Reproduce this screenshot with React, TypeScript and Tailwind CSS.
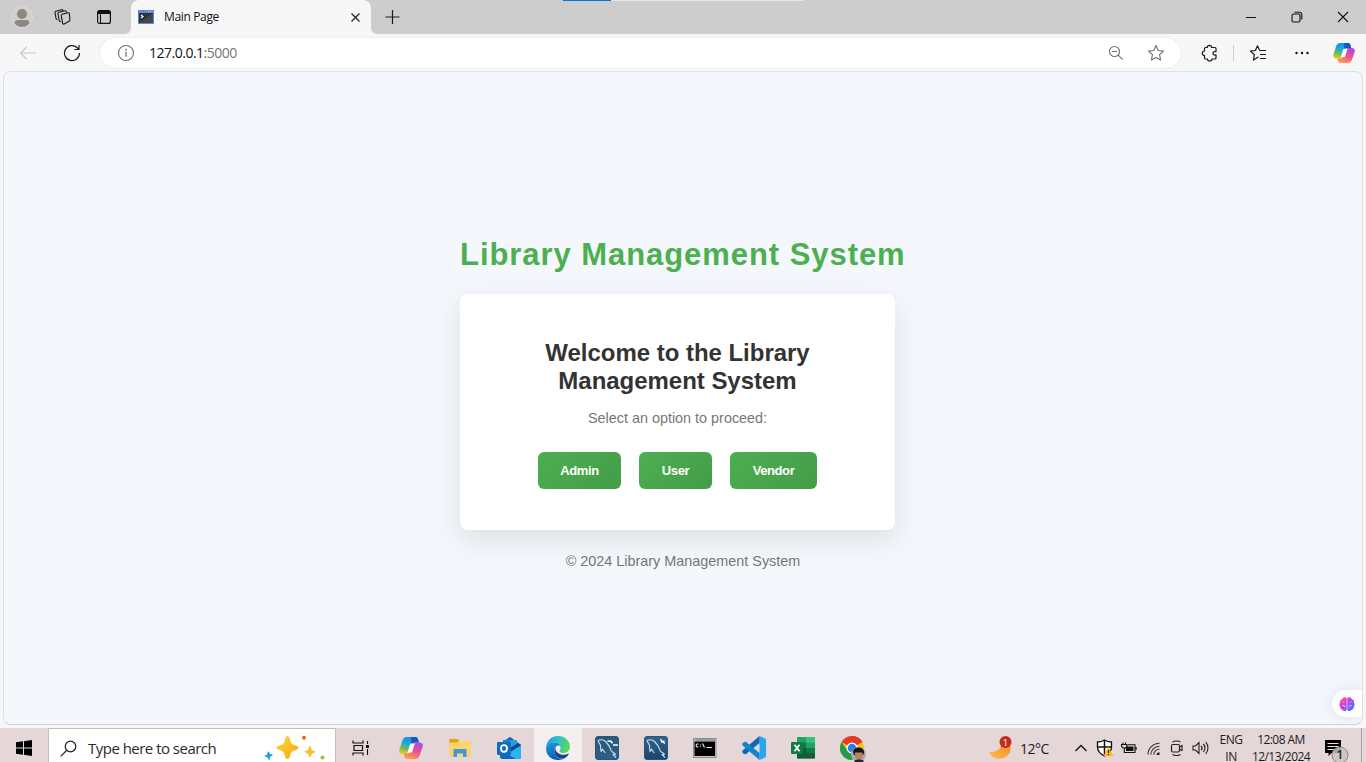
import React, { useId } from "react";

type IconProps = { w: number; h: number; children: React.ReactNode; className?: string };

function Icon({ w, h, children, className = "" }: IconProps) {
  return (
    <svg width={w} height={h} viewBox={`0 0 ${w} ${h}`} fill="none" className={`shrink-0 ${className}`}>
      {children}
    </svg>
  );
}

function Cell({ className, children }: { className: string; children: React.ReactNode }) {
  return <div className={`flex h-full shrink-0 items-center justify-center ${className}`}>{children}</div>;
}

function CopilotLogo({ size }: { size: number }) {
  const id = useId();
  return (
    <svg width={size} height={size} viewBox="0 0 24 24" className="shrink-0">
      <defs>
        <linearGradient id={`${id}a`} x1="0.6" y1="0" x2="0.3" y2="1">
          <stop offset="0" stopColor="#1b8cf0" />
          <stop offset="0.4" stopColor="#19a7dd" />
          <stop offset="0.7" stopColor="#6cba5a" />
          <stop offset="1" stopColor="#f2c51b" />
        </linearGradient>
        <linearGradient id={`${id}b`} x1="0.7" y1="0" x2="0.3" y2="1">
          <stop offset="0" stopColor="#a64be6" />
          <stop offset="0.5" stopColor="#ee5090" />
          <stop offset="1" stopColor="#ffa04a" />
        </linearGradient>
      </defs>
      <path d="M8 1h8.5c1.3 0 2 .8 2.400 2l1 3.500h-4c-1.500 0-2.300.8-2.700 2.200l-2 6.800c-.5 1.700-1.400 2.500-3 2.500H3.500C.8 18-.3 16 .4 13.400L3.600 4C4.300 2 5.800 1 8 1z" fill={`url(#${id}a)`} />
      <path d="M12.500 1h4c1.300 0 2 .8 2.400 2l1 3.500h-4c-1.400 0-2.200.7-2.600 2L12 6z" fill="#1456c8" />
      <path d="M16 23H8.200c-1.500 0-2.300-.8-2.700-2.200L4.700 18h3.500c1.600 0 2.500-.8 3-2.500l2-6.800c.4-1.400 1.200-2.200 2.700-2.200h4.600c2.700 0 3.800 2 3.100 4.600L20.400 20c-.7 2-2.200 3-4.400 3z" fill={`url(#${id}b)`} />
      <path d="M12.200 7.400h4.200c-.6.300-.9.900-1.100 1.700l-1.800 6c-.3 1.100-.9 1.600-1.900 1.600H7.700c.7-.3 1.100-.9 1.400-1.900l1.600-5.600c.3-1.100.7-1.600 1.500-1.800z" fill="#fff" />
    </svg>
  );
}

function Star() {
  return <path d="M9 1.600l2.200 4.900 5.300.6-4 3.600 1.100 5.300L9 13.400 4.400 16l1.100-5.300-4-3.600 5.300-.6z" strokeLinejoin="round" />;
}

function TitleBar() {
  return (
    <header className="relative flex h-[34px] shrink-0 bg-[#cdcdcd]">
      <Cell className="w-[44px]">
        <Icon w={22} h={22}>
          <circle cx="11" cy="11" r="10.500" fill="#d3d0cc" stroke="#dedbd7" />
          <circle cx="11" cy="8" r="5" fill="#8b8783" />
          <path d="M3.500 17c0-2 2-3 3.500-3h8c1.500 0 3.500 1 3.500 3-1.700 2.600-4.400 4-7.500 4s-5.800-1.400-7.500-4z" fill="#8b8783" />
        </Icon>
      </Cell>
      <Cell className="w-[36px]">
        <Icon w={18} h={18}>
          <g stroke="#1a1a1a" strokeWidth="1.100" strokeLinejoin="round" strokeLinecap="round">
            <path d="M9.200 6.300l5.600-1.500c.8-.2 1.500.3 1.600 1.100l.5 6c0 .7-.3 1.200-.9 1.400l-4.800 2.700c-.8.300-1.500-.1-1.600-.9L8.200 7.700c-.1-.7.3-1.200 1-1.400z" />
            <path d="M13.200 4.300v-.6c0-.7-.6-1.100-1.300-.9L6 4.300c-.8.200-1.200.8-1 1.500l1.200 6.700c.1.700.6 1.200 1.400 1.300" />
            <path d="M9.900 2.600c-.1-.7-.7-1.100-1.400-.9L3 3.200c-.8.200-1.200.8-1 1.500l1 5.700c.1.600.500 1 1.100 1.100" />
          </g>
        </Icon>
      </Cell>
      <Cell className="w-[48px]">
        <Icon w={16} h={16}>
          <rect x="1.600" y="1.600" width="12.800" height="12.800" rx="2" stroke="#111" strokeWidth="1.200" />
          <path d="M1.500 5V3.500a2 2 0 0 1 2-2h9a2 2 0 0 1 2 2V5z" fill="#111" />
          <path d="M4.500 5v9" stroke="#111" strokeWidth="1.100" />
        </Icon>
      </Cell>
      <div className="relative ml-[3px] flex w-[240px] items-center rounded-t-lg bg-[#f7f7f7] pl-[7px] pr-[9px]">
        <svg className="absolute bottom-0 -left-1.5" width="6" height="6"><path d="M6 0v6H0a6 6 0 0 0 6-6z" fill="#f7f7f7" /></svg>
        <svg className="absolute -right-1.5 bottom-0" width="6" height="6"><path d="M0 0v6h6a6 6 0 0 1-6-6z" fill="#f7f7f7" /></svg>
        <Icon w={16} h={14}>
          <rect width="16" height="14" fill="#5b8ad6" />
          <rect x="1" y="3" width="14" height="10" fill="#2f3133" />
          <path d="M1 13L15 3v10z" fill="#454749" />
          <path d="M3 5l2 1.500L3 8" stroke="#fff" strokeWidth="1.200" />
          <path d="M10 1.500h1M12 1.500h1" stroke="#bcd3f5" />
          <path d="M14 1.500h1" stroke="#e08a6a" />
        </Icon>
        <span className="ml-[10px] flex-1 text-[12px] leading-4 tracking-[-0.35px] text-[#111]">Main Page</span>
        <Icon w={14} h={14}>
          <path d="M3.500 3.500l8 8M11.500 3.500l-8 8" stroke="#222" strokeWidth="1.200" />
        </Icon>
      </div>
      <Cell className="w-[43px]">
        <Icon w={16} h={16}>
          <path d="M7.500 1v14M.5 8h14" stroke="#1a1a1a" strokeWidth="1.200" />
        </Icon>
      </Cell>
      <div className="ml-auto flex">
        <Cell className="w-[46px]">
          <Icon w={12} h={12}><path d="M1 6.500h10" stroke="#111" /></Icon>
        </Cell>
        <Cell className="w-[46px]">
          <Icon w={12} h={12}>
            <rect x="1" y="3" width="8" height="8" rx="1.500" stroke="#111" strokeWidth="1.100" />
            <path d="M3.500 1.200h5a2.300 2.300 0 0 1 2.300 2.300v5" stroke="#111" strokeWidth="1.100" />
          </Icon>
        </Cell>
        <Cell className="w-[46px]">
          <Icon w={12} h={12}><path d="M1 1l10 10M11 1L1 11" stroke="#111" strokeWidth="1.100" /></Icon>
        </Cell>
      </div>
      <div className="absolute left-[563px] top-0 flex h-px">
        <div className="w-12 bg-[#0078d7]" />
        <div className="w-[193px] bg-[#e6e6e6]" />
      </div>
    </header>
  );
}

function Toolbar() {
  return (
    <nav className="flex h-[37px] shrink-0 items-center bg-[#f7f7f7] pl-[6px]">
      <Cell className="w-11">
        <Icon w={18} h={14}><path d="M17 7H1.500M7.500 1L1.500 7l6 6" stroke="#c8c8c8" strokeWidth="1.100" /></Icon>
      </Cell>
      <Cell className="w-11">
        <Icon w={18} h={18}>
          <path d="M16.500 9A7.500 7.500 0 1 1 14 3.500l1.800 1.700" stroke="#1a1a1a" strokeWidth="1.200" />
          <path d="M16 1v4.500h-4.500" stroke="#1a1a1a" strokeWidth="1.200" />
        </Icon>
      </Cell>
      <div className="ml-[6px] flex h-[30px] w-[1081px] items-center rounded-full bg-white pl-[8px] pr-[5px] shadow-[0_0_2px_rgba(0,0,0,0.12)]">
        <Cell className="w-9">
          <Icon w={18} h={18}>
            <circle cx="9" cy="9" r="7.500" stroke="#6f6f6f" strokeWidth="1.100" />
            <path d="M9 7.800v5" stroke="#6f6f6f" strokeWidth="1.300" />
            <circle cx="9" cy="5.700" r="0.900" fill="#6f6f6f" />
          </Icon>
        </Cell>
        <span className="ml-[5px] flex-1 text-[14px] leading-5 tracking-[-0.5px] text-[#111]">
          127.0.0.1<span className="text-[#767676]">:5000</span>
        </span>
        <Cell className="w-10">
          <Icon w={16} h={16}>
            <circle cx="6.500" cy="6.500" r="5" stroke="#6f6f6f" strokeWidth="1.100" />
            <path d="M4 6.500h5M10.200 10.200l4.500 4.500" stroke="#6f6f6f" strokeWidth="1.100" />
          </Icon>
        </Cell>
        <Cell className="w-10">
          <Icon w={18} h={18}><g stroke="#6f6f6f" strokeWidth="1.100"><Star /></g></Icon>
        </Cell>
      </div>
      <Cell className="ml-[7px] w-11">
        <Icon w={18} h={18}>
          <path d="M6.200 3.500c0-1.300 1-2.200 2.300-2.200s2.200.9 2.200 2.200H14c.6 0 1 .4 1 1v3.200c-1.700-.6-3 .3-3 1.600s1.300 2.200 3 1.600V14c0 .6-.4 1-1 1h-3c.2 1.200-.9 2-2.300 2s-2.300-.8-2.200-2H4.500c-.6 0-1-.4-1-1v-2.500C2.200 11.500 1.300 10.500 1.300 9.300S2.200 7 3.500 7V4.500c0-.6.4-1 1-1z" stroke="#1a1a1a" strokeWidth="1.200" strokeLinejoin="round" />
        </Icon>
      </Cell>
      <div className="ml-px h-4 w-px bg-[#cfcfcf]" />
      <Cell className="ml-[2px] w-11">
        <Icon w={18} h={18}>
          <path d="M9.500 13.400L9 13.200 4.400 16l1-5.300-4-3.600 5-.6L8.500 1.800l2.200 4.700M10.700 6.500H17M11 10.500h6M11 14.500h6" stroke="#1a1a1a" strokeWidth="1.200" strokeLinejoin="round" />
        </Icon>
      </Cell>
      <Cell className="w-11">
        <Icon w={16} h={4}>
          <circle cx="2.500" cy="2" r="1.200" fill="#111" /><circle cx="8" cy="2" r="1.200" fill="#111" /><circle cx="13.500" cy="2" r="1.200" fill="#111" />
        </Icon>
      </Cell>
      <Cell className="w-10"><CopilotLogo size={22} /></Cell>
    </nav>
  );
}

function ActionButton({ label, width }: { label: string; width: string }) {
  return (
    <button className={`h-[37px] rounded-md bg-linear-[135deg,#4caf50,#449d48] text-[13px] font-bold tracking-[-0.400px] text-white ${width}`}>{label}</button>
  );
}

function Page() {
  return (
    <div className="flex min-h-0 flex-1 bg-[#f7f7f7] px-[3px] pb-[3px]">
      <main className="relative flex flex-1 flex-col items-center overflow-hidden rounded-lg border border-[#dfe1e4] border-b-[#cfd1d4] bg-[#f4f7fc] pt-[165px] font-['Liberation_Sans',Arial,sans-serif]">
        <div className="flex w-[446px] flex-col">
          <h1 className="whitespace-nowrap text-[31px] font-bold leading-9 tracking-[0.940px] text-[#4caf50]">Library Management System</h1>
          <section className="mt-[21px] flex h-[236px] w-[435px] flex-col items-center rounded-lg bg-white pt-[45px] text-center shadow-[0_10px_30px_rgba(0,0,0,0.1)]">
            <h2 className="text-[24px] font-bold leading-7 tracking-[-0.030px] text-[#333]">Welcome to the Library<br />Management System</h2>
            <p className="mt-[15px] text-[14.400px] leading-4 text-[#777]">Select an option to proceed:</p>
            <div className="mt-[26px] flex gap-[18px]">
              <ActionButton label="Admin" width="w-[83px]" />
              <ActionButton label="User" width="w-[73px]" />
              <ActionButton label="Vendor" width="w-[87px]" />
            </div>
          </section>
          <footer className="mt-[23px] text-center text-[14.400px] leading-4 text-[#777]">© 2024 Library Management System</footer>
        </div>
        <div className="absolute bottom-[7px] right-0 flex h-[27px] w-[30px] items-center justify-center rounded-l-full bg-white shadow-[0_0_14px_rgba(120,130,160,0.18)]">
          <BrainIcon />
        </div>
      </main>
    </div>
  );
}

function BrainIcon() {
  return (
    <Icon w={16} h={16}>
      <defs>
        <linearGradient id="brain" x1="0" y1="0" x2="1" y2="1">
          <stop offset="0" stopColor="#ff6a3c" /><stop offset="0.35" stopColor="#e13bd0" /><stop offset="0.65" stopColor="#7a5cf5" /><stop offset="1" stopColor="#2f7bff" />
        </linearGradient>
      </defs>
      <path d="M7.700 2C6.200.5 3.500 1.200 3.200 3.200 1.300 3.500.6 5.300 1.200 6.600 0 7.500 0 9.700 1.200 10.500c-.3 2 1 3 2.300 3.200.8 1.700 3.200 1.800 4.200.3zM8.300 2c1.500-1.500 4.200-.8 4.500 1.200 1.900.3 2.600 2.100 2 3.400 1.200.9 1.200 3.100 0 3.900.3 2-1 3-2.300 3.200-.8 1.700-3.200 1.800-4.200.3z" fill="url(#brain)" />
      <path d="M3.500 5.500l2 1M3 9.500h2.500v2M12.500 5.500l-2 1M13 9.500h-2.500v2" stroke="#e9c9ff" strokeWidth="0.700" />
    </Icon>
  );
}

function DolphinTile({ tool }: { tool: boolean }) {
  return (
    <Icon w={24} h={24}>
      <defs>
        <linearGradient id={tool ? "tileA" : "tileB"} x1="0" y1="0" x2="0" y2="1">
          <stop stopColor={tool ? "#28597c" : "#2d6494"} /><stop offset="1" stopColor={tool ? "#2d6088" : "#1e4468"} />
        </linearGradient>
      </defs>
      <rect x="0.500" y="0.500" width="23" height="23" rx="2.500" fill={`url(#${tool ? "tileA" : "tileB"})`} stroke="#2a5678" />
      <path d="M3 4.500c3-1.500 6-.5 8 1.500 3.500 3.500 4 6 5.500 9 .8 1.500 2.500 1.800 4 3.300l-2.500.2 3 3M3 4.500c.2 2 2 3 2.500 5 .4 2-.3 3.500.7 6l1.300-2.500 2.700 4" stroke="#cfe0ec" strokeWidth="1.100" strokeLinejoin="round" />
      {tool ? <path d="M12.500 5l3.500.2 1.500 2M18 9h5" stroke="#fff" strokeWidth="1.600" /> : <path d="M16.500 3l1.500 2.500 3 2M17 6l3.500-1" stroke="#fff" strokeWidth="1.400" />}
    </Icon>
  );
}

function TaskIcons() {
  return (
    <>
      <Cell className="w-[50px]">
        <Icon w={18} h={16}>
          <path d="M1 .5v2.500h10V.5M1 15.500V13h10v2.500M2 5.500h8.500v5H2z" stroke="#111" strokeWidth="1.200" />
          <path d="M15.500 1v3M15.500 9v6" stroke="#111" strokeWidth="1.100" />
          <rect x="14" y="5" width="3" height="3" fill="#111" />
        </Icon>
      </Cell>
      <Cell className="w-[49px]"><CopilotLogo size={24} /></Cell>
      <Cell className="w-[49px]">
        <Icon w={24} h={20}>
          <path d="M1.500 2c0-.6.400-1 1-1H10l1.500 2.500V8h-10z" fill="#e0a30d" />
          <path d="M1.500 4.500H9L11 3h11.500v15.500h-21z" fill="#fdd466" />
          <path d="M5.500 19v-6.500c0-1 .5-1.500 1.500-1.500h10c1 0 1.500.5 1.500 1.500V19h-3.500v-3.500h-6V19z" fill="#3d97e0" />
        </Icon>
      </Cell>
      <Cell className="w-[50px]">
        <Icon w={26} h={24}>
          <path d="M4 8l9-6.500c.7-.5 1.300-.5 2 0L25 9v12c0 1-.7 2-2 2H7c-2 0-3-1-3-2z" fill="#1066b8" />
          <path d="M7 4h14v10l-7 4-7-4z" fill="#1b82cf" /><path d="M14 4h7v6l-7 4z" fill="#2c9be0" />
          <path d="M25 9.500L11 18l9 5h3c1.500 0 2-1 2-2z" fill="#29b5ee" /><path d="M25 9L14 16l-3-2 11-7z" fill="#0b4a94" />
          <rect x="1" y="6" width="14" height="13" rx="1.200" fill="#0f6cbd" />
          <ellipse cx="8" cy="12.500" rx="3" ry="3.300" stroke="#fff" strokeWidth="1.800" />
        </Icon>
      </Cell>
      <Cell className="w-[48px] bg-[#f3eeef]">
        <Icon w={24} h={24}>
          <defs>
            <linearGradient id="edgeTop" x1="0" y1="0.300" x2="1" y2="0.500"><stop stopColor="#1ca2e0" /><stop offset="0.500" stopColor="#2fc2c7" /><stop offset="1" stopColor="#68d64c" /></linearGradient>
            <linearGradient id="edgeLeft" x1="0" y1="0" x2="0.600" y2="1"><stop stopColor="#1fa0e4" /><stop offset="1" stopColor="#0c54a8" /></linearGradient>
          </defs>
          <path d="M.3 11C.7 4.500 5.800 0 12 0c7 0 12 5 12 10.500 0 4-3 6.500-6.500 6.500-3 0-4-1-4-2 0-.8 1-1.200 1-3C14.500 9 12 6.500 8.500 6.500 4.500 6.500 1 9 .3 11z" fill="url(#edgeTop)" />
          <path d="M.1 12C.5 8.500 4 6.500 8.500 6.500c3 0 5 1.500 5.700 3.500-3-1.500-6 1-6 4.500 0 5 4 9.200 9.300 8.200C15 23.800 13.500 24 12 24 5.500 24-.5 19 .1 12z" fill="url(#edgeLeft)" />
          <path d="M10.800 10c-1.800 1-2.600 2.600-2.600 4.700 0 5 5 9.300 10 7.700 2-1 3.500-2.400 4.500-4.200.2-.5-.2-.8-.7-.5-1.200.7-2.700 1-4.200 1-5 0-8.400-3.300-8.400-6.300 0-1 .5-1.800 1.400-2.400z" fill="#114a8b" />
        </Icon>
      </Cell>
      <Cell className="w-[50px]"><DolphinTile tool /></Cell>
      <Cell className="w-[48px]"><DolphinTile tool={false} /></Cell>
      <Cell className="w-[49px]">
        <Icon w={24} h={20}>
          <rect x="0.500" y="0.500" width="22.500" height="19" fill="#c9c9c9" stroke="#8b8b8b" />
          <path d="M2 2h20" stroke="#6e6e6e" /><rect x="1.500" y="3.500" width="20.500" height="14.500" fill="#000" />
          <path d="M5.500 6H4.200c-.7 0-1 .5-1 1.500s.3 1.500 1 1.500h1.300M7.500 6.500v.8M7.500 8.200V9M9.500 5.500l2 4M13.500 9.500H19" stroke="#e5e5e5" strokeWidth="1.200" />
        </Icon>
      </Cell>
      <Cell className="w-[49px]">
        <Icon w={24} h={24}>
          <path d="M17.500 0L24 3v18l-6.500 3z" fill="#27a5f2" />
          <path d="M17.500 0v7L3.500 18.500.3 16.700v-2z" fill="#0a6ab5" />
          <path d="M17.500 24v-7L3.500 5.500.3 7.300v2z" fill="#1185cc" />
        </Icon>
      </Cell>
      <Cell className="w-[49px]">
        <Icon w={24} h={22}>
          <rect x="6" width="18" height="21.500" rx="1" fill="#21a366" /><path d="M15 0h8c.6 0 1 .4 1 1v4.500h-9z" fill="#33c481" />
          <path d="M6 5.500h9V11H6z" fill="#107c41" /><path d="M6 11h9v5H6z" fill="#185c37" /><path d="M15 11h9v5h-9z" fill="#107c41" /><path d="M6 16h18v4.500c0 .6-.4 1-1 1H7c-.6 0-1-.4-1-1z" fill="#185c37" />
          <rect y="5" width="12" height="12" rx="1" fill="#107c41" />
          <path d="M3.500 7.700l5 6.600M8.500 7.700l-5 6.600" stroke="#fff" strokeWidth="1.700" />
        </Icon>
      </Cell>
      <Cell className="w-[50px] pl-[2px]">
        <Icon w={27} h={27} className="mt-[3px]">
          <circle cx="12" cy="12" r="12" fill="#fbc116" />
          <path d="M12 12L1.600 6A12 12 0 0 1 22.400 6z" fill="#e33b2e" /><path d="M1.600 6A12 12 0 0 0 12 24l5-9-9 .5z" fill="#229b4d" /><path d="M12 6h10.400A12 12 0 0 0 12 0z" fill="#e33b2e" />
          <circle cx="12" cy="12" r="5.500" fill="#fff" /><circle cx="12" cy="12" r="4.300" fill="#2b7de9" />
          <circle cx="18.500" cy="18.500" r="7.500" fill="#9fb0b0" />
          <path d="M13 16c0-3 2-4.500 5.500-4.500s6 2 5.500 5.500l-1 2h-9z" fill="#191614" /><path d="M15 16.500h7.500v4c0 2-1.500 3.500-3.700 3.500S15 22.500 15 20.500z" fill="#b98464" /><path d="M14 25c2-2 8-2 10 0l-2 2h-6z" fill="#1f2a36" />
        </Icon>
      </Cell>
    </>
  );
}

function Tray() {
  return (
    <div className="ml-auto flex h-full items-center">
      <Icon w={24} h={24}>
        <defs><linearGradient id="moon" x1="1" y1="0" x2="0.200" y2="1"><stop stopColor="#f08a1e" /><stop offset="1" stopColor="#ffb84d" /></linearGradient></defs>
        <path d="M12 5c3 6-2 12-11 11 3 6.500 10.500 8.500 16 5.500 5.500-3 7-9 4.500-14z" fill="url(#moon)" />
        <circle cx="17.500" cy="6" r="6" fill="#c42b1c" />
        <text x="17.500" y="9.500" textAnchor="middle" fontSize="9.500" fill="#fff">1</text>
      </Icon>
      <span className="ml-[8px] w-[49px] text-[14px] tracking-[-0.5px] text-[#1c1c1c]">12°C</span>
      <Cell className="w-[24px]"><Icon w={14} h={8}><path d="M1.500 7L7 1.500 12.500 7" stroke="#111" strokeWidth="1.300" /></Icon></Cell>
      <Cell className="w-[24px]">
        <Icon w={18} h={18}>
          <path d="M8.500 1C6.500 2.500 4 3 1.500 3v5c0 4 3 7 7 9 4-2 7-5 7-9V3c-2.500 0-5-.5-7-2z" fill="#fff" stroke="#111" strokeWidth="1.300" />
          <path d="M8.500 1v16M1.500 8h14" stroke="#111" strokeWidth="1.500" />
          <path d="M12.300 8L17.500 17H7.500z" fill="#fcbf0a" /><path d="M12.500 11v3M12.500 15v1.200" stroke="#222" strokeWidth="1.200" />
        </Icon>
      </Cell>
      <Cell className="w-[24px]">
        <Icon w={16} h={12}>
          <path d="M2 .5v2M4.500.5v2M.5 2.500h5.500v2L4.500 6H2L.5 4.500zM3.300 6v4.500H14V2.800H7" stroke="#111" strokeWidth="1.100" />
          <rect x="5" y="4.500" width="7.500" height="4.500" fill="#111" /><path d="M15 5v3" stroke="#111" strokeWidth="1.300" />
        </Icon>
      </Cell>
      <Cell className="w-[24px] pl-px">
        <Icon w={14} h={14} className="mt-[2px]">
          <path d="M1 12.500C1 6 6 1.500 12.500 1.300M3.800 12.800C3.800 8 7.500 4.500 12.500 4.300M6.800 12.800c0-3 2.300-5.500 5.700-5.500" stroke="#333" strokeWidth="1.100" />
          <path d="M9.500 13c0-1.700 1.200-2.800 3-2.800V13z" fill="#222" />
        </Icon>
      </Cell>
      <Cell className="w-[24px]">
        <Icon w={14} h={16}>
          <rect x="1.500" y="4.500" width="8" height="7.500" rx="1.500" stroke="#222" strokeWidth="1.200" />
          <path d="M9.500 7l2.500-1.500v5L9.500 9.500M2.500 2c2-1.300 6-1.300 8 0M2.500 14.500c2 1.300 6 1.300 8 0" stroke="#222" strokeWidth="1.100" />
        </Icon>
      </Cell>
      <Cell className="w-[24px]">
        <Icon w={18} h={14}>
          <path d="M1 5h2.500L7 1.500v11L3.500 9H1zM9 4.800c1.200 1.200 1.200 3.200 0 4.400M11.300 3c2.200 2.200 2.200 5.800 0 8M13.700 1.200c3 3.200 3 8.400 0 11.600" stroke="#222" strokeWidth="1.100" />
        </Icon>
      </Cell>
      <div className="ml-[3px] flex w-[30px] flex-col items-center text-[12px] leading-[17px] tracking-[-0.400px] text-[#1c1c1c]">
        <span>ENG</span><span>IN</span>
      </div>
      <div className="flex w-[70px] flex-col items-center whitespace-nowrap text-[12px] leading-[17px] tracking-[-0.550px] text-[#1c1c1c]">
        <span>12:08 AM</span><span>12/13/2024</span>
      </div>
      <div className="ml-[8px] w-[37px]">
        <Icon w={26} h={28} className="mt-[10px]">
          <path d="M1 1h16v13H7.500L4.500 17v-3H1z" fill="#000" />
          <path d="M3.500 4.500h11M3.500 7.500h11M3.500 10.500h7" stroke="#ecdfe1" strokeWidth="1.100" />
          <circle cx="16" cy="16" r="8" fill="#c9c2c3" fillOpacity="0.850" stroke="#8d8889" />
          <text x="16" y="20" textAnchor="middle" fontSize="12" fontWeight="600" fill="#222">1</text>
        </Icon>
      </div>
      <div className="h-full w-[5px] border-l border-[#a79fa0]" />
    </div>
  );
}

function Taskbar() {
  return (
    <footer className="h-[34px] shrink-0 overflow-hidden bg-[#e5d6d8]">
      <div className="flex h-10 items-center">
        <Cell className="w-12">
          <Icon w={16} h={16}><path d="M0 2.300L7 1.300v6.200H0zM8 1.200L16 0v7.500H8zM0 8.500h7v6.200l-7-1zM8 8.500h8V16l-8-1.200z" fill="#000" /></Icon>
        </Cell>
        <div className="flex h-full w-[288px] items-center border border-[#c4bcbe] bg-white pl-[11px]">
          <Icon w={17} h={17}>
            <circle cx="10.500" cy="6.500" r="5.300" stroke="#222" strokeWidth="1.200" /><path d="M6.500 10.500L.7 16.300" stroke="#222" strokeWidth="1.200" />
          </Icon>
          <span className="ml-[11px] w-[176px] text-[15px] tracking-[-0.520px] text-[#2b2b2b]">Type here to search</span>
          <Icon w={62} h={28}>
            <defs><linearGradient id="spark" x1="0" y1="0" x2="1" y2="1"><stop stopColor="#ffd83b" /><stop offset="1" stopColor="#f5a80f" /></linearGradient></defs>
            <path d="M23.500 2c1 0 2 1 2.500 3.500 1 4 2 5 5.500 6 4 1 4 3.500 0 4.500-3.500 1-4.500 2-5.500 6-1 4-4 4-5 0-1-4-2-5-5.500-6-4-1-4-3.500 0-4.500 3.500-1 4.500-2 5.500-6C21.500 3 22.500 2 23.500 2z" fill="url(#spark)" />
            <path d="M46 12c1 0 1.300 3.200 2 3.900s3.500 1 3.500 1.900-2.800 1.200-3.500 1.900-1 3.500-2 3.500-1.300-2.800-2-3.500-3.500-1-3.500-1.900 2.800-1.200 3.500-1.900 1-3.900 2-3.900z" fill="#fbc02d" />
            <path d="M4.500 17.500c1 .3 1 2 1.600 2.500s2.600 0 2.600 1-2 1-2.400 1.700.2 3-1 3-1.300-2-2-2.400-2.700-.2-2.700-1.200 2-1 2.400-1.700.500-2.900 1.500-2.900z" fill="#15a3e8" />
            <circle cx="40" cy="3.800" r="2" fill="#f2602a" /><circle cx="58.500" cy="23.500" r="2" fill="#8bc83f" />
          </Icon>
        </div>
        <TaskIcons />
        <Tray />
      </div>
    </footer>
  );
}

export default function App() {
  return (
    <div className="flex h-[762px] w-[1366px] flex-col overflow-hidden font-['Open_Sans','Noto_Sans',sans-serif]">
      <TitleBar />
      <Toolbar />
      <Page />
      <Taskbar />
    </div>
  );
}
